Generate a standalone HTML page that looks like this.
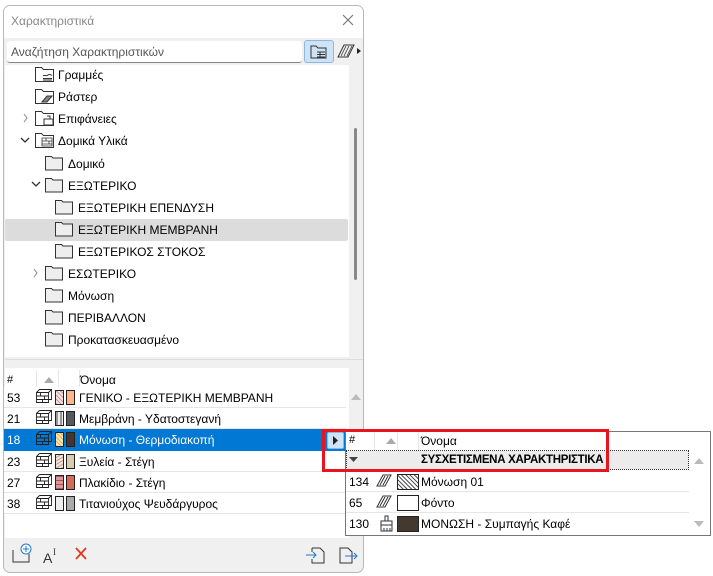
<!DOCTYPE html>
<html><head><meta charset="utf-8"><style>
*{box-sizing:border-box;margin:0;padding:0}
body{width:713px;height:576px;background:#fff;font-family:"Liberation Sans","DejaVu Sans",sans-serif;font-size:12px;color:#000;position:relative;overflow:hidden}
.a{position:absolute}
.panel{left:3px;top:5px;width:361px;height:568px;border:1px solid #b8b8b8;border-radius:7px;background:#f0f0f0;overflow:hidden}
.t{position:absolute;white-space:nowrap}
.row{position:absolute;left:4px;width:342px;height:21px;border-bottom:1px solid #e6e6e6;background:#fff}
.sw{position:absolute;width:9px;height:15px;border:1px solid #222}
</style></head><body>
<div class="a panel">
 <div class="a" style="left:0;top:0;width:361px;height:32px;background:#fff"></div>
 <div class="t" style="left:7px;top:8px;color:#888;font-size:12px">Χαρακτηριστικά</div>
 <svg class="a" style="left:338px;top:8px" width="12" height="12"><path d="M1 1L11 11M11 1L1 11" stroke="#777" stroke-width="1.2"/></svg>
 <div class="a" style="left:3px;top:35px;width:295px;height:22px;background:#fff;border-bottom:1px solid #888;border-radius:3px"></div>
 <div class="t" style="left:7px;top:39px;color:#555;font-size:12px">Αναζήτηση Χαρακτηριστικών</div>
 <div class="a" style="left:300px;top:34px;width:30px;height:23px;background:#cfe3f7;border:1px solid #8fb8e0;border-radius:3px"></div>
 <svg class="a" style="left:305px;top:38px" width="20" height="16"><path d="M2 2h5l2 2h8v10H2z" fill="none" stroke="#333"/><path d="M8 8h8M8 10.5h8M8 13h8M11 8v5" stroke="#333"/></svg>
 <svg class="a" style="left:333px;top:38px" width="26" height="14"><path d="M1 13L7 1h10l-6 12z" fill="none" stroke="#333"/><path d="M4 12l5-10M7 12l5-10M10 12l5-10" stroke="#333" stroke-width=".8"/><path d="M20 4l4 3-4 3z" fill="#222"/></svg>
 <div class="a" style="left:1px;top:59px;width:344px;height:292px;background:#fff"></div>
 <div class="a" style="left:350px;top:122px;width:3px;height:152px;background:#888;border-radius:2px"></div>
 <div class="a" style="left:1px;top:213px;width:343px;height:22px;background:#dcdcdc;border-radius:2px"></div>
 <div class="a" style="left:1px;top:353px;width:359px;height:1px;background:#ddd"></div>
 <div class="a" style="left:1px;top:362px;width:344px;height:170px;background:#fff"></div>
 <div class="t" style="left:3px;top:368px;font-size:11px">#</div>
 <svg class="a" style="left:40px;top:371px" width="10" height="6"><path d="M0 6L5 0L10 6z" fill="#aaa"/></svg>
 <div class="a" style="left:32px;top:364px;width:1px;height:17px;background:#e6e6e6"></div>
 <div class="a" style="left:54px;top:364px;width:1px;height:17px;background:#e6e6e6"></div>
 <div class="a" style="left:75px;top:364px;width:1px;height:17px;background:#e6e6e6"></div>
 <div class="t" style="left:76px;top:367px;font-size:12px">Όνομα</div>
 <svg class="a" style="left:347px;top:388px" width="10" height="6"><path d="M0 6L5 0L10 6z" fill="#bbb"/></svg>
</div>

<svg class="a" style="left:0;top:0" width="360" height="360" fill="none" stroke="#333">
 <g><path d="M35.5 67.5h6l2 2h10v12h-18z"/><path d="M43 76c2-2 3 1 5-1s3 1 4 0M43 78.5h9M43 80h9"/></g>
 <g><path d="M35.5 89.5h6l2 2h10v12h-18z"/><path d="M42 102l5-6h5l-5 6z" fill="#888"/></g>
 <g><path d="M35.5 111.5h6l2 2h10v12h-18z"/><path d="M44 119h9v6h-9zM47 116h3v3" fill="#fff"/></g>
 <g><path d="M35.5 133.5h6l2 2h10v12h-18z"/><path d="M42 138h10v8H42zM42 141h10M42 144h10M46 138v3M49 141v3" stroke-width=".8" fill="#fff"/></g>
 <path d="M24 114l3 4-3 4" stroke="#888"/>
 <path d="M21 138l4 4 4-4" stroke="#333" stroke-width="1.3"/>
 <path d="M32 182l4 4 4-4" stroke="#333" stroke-width="1.3"/>
 <path d="M34 269l3 4-3 4" stroke="#888"/>
</svg>
<svg class="a" style="left:0;top:0" width="360" height="360">
 <g fill="#eee" stroke="#333">
  <path d="M45.5 156.5h6l1.5 1.5h9.5v12h-17z"/>
  <path d="M45.5 178.5h6l1.5 1.5h9.5v12h-17z"/>
  <path d="M55.5 200.5h6l1.5 1.5h9.5v12h-17z"/>
  <path d="M55.5 222.5h6l1.5 1.5h9.5v12h-17z"/>
  <path d="M55.5 244.5h6l1.5 1.5h9.5v12h-17z"/>
  <path d="M45.5 266.5h6l1.5 1.5h9.5v12h-17z"/>
  <path d="M45.5 288.5h6l1.5 1.5h9.5v12h-17z"/>
  <path d="M45.5 310.5h6l1.5 1.5h9.5v12h-17z"/>
  <path d="M45.5 332.5h6l1.5 1.5h9.5v12h-17z"/>
 </g>
</svg>
<div class="t" style="left:58px;top:68px">Γραμμές</div>
<div class="t" style="left:58px;top:90px">Ράστερ</div>
<div class="t" style="left:58px;top:112px">Επιφάνειες</div>
<div class="t" style="left:58px;top:134px">Δομικά Υλικά</div>
<div class="t" style="left:68px;top:157px">Δομικό</div>
<div class="t" style="left:68px;top:179px">ΕΞΩΤΕΡΙΚΟ</div>
<div class="t" style="left:78px;top:201px">ΕΞΩΤΕΡΙΚΗ ΕΠΕΝΔΥΣΗ</div>
<div class="t" style="left:78px;top:223px">ΕΞΩΤΕΡΙΚΗ ΜΕΜΒΡΑΝΗ</div>
<div class="t" style="left:78px;top:245px">ΕΞΩΤΕΡΙΚΟΣ ΣΤΟΚΟΣ</div>
<div class="t" style="left:68px;top:267px">ΕΣΩΤΕΡΙΚΟ</div>
<div class="t" style="left:68px;top:289px">Μόνωση</div>
<div class="t" style="left:68px;top:311px">ΠΕΡΙΒΑΛΛΟΝ</div>
<div class="t" style="left:68px;top:333px">Προκατασκευασμένο</div>

<div class="row" style="top:387px"></div>
<div class="row" style="top:408px"></div>
<div class="row" style="top:429px;background:#0078d4;border:none;height:22px"></div>
<div class="row" style="top:451px"></div>
<div class="row" style="top:472px"></div>
<div class="row" style="top:493px"></div>
<svg class="a" style="left:0;top:0" width="360" height="520">
 <defs><path id="br" fill="none" stroke="#222" stroke-width=".9" d="M36.5 392.5h12v10h-12zM39.5 389.5h12v10h-3M36.5 392.5l3-3M48.5 392.5l3-3M36.5 396h12M36.5 399.5h12M40.5 392.5v3.5M44.5 396v3.5M42.5 399.5v3"/></defs>
 <use href="#br"/><use href="#br" y="21"/><use href="#br" y="42"/><use href="#br" y="64"/><use href="#br" y="85"/><use href="#br" y="106"/>
</svg>
<div class="sw" style="left:55px;top:390px;background:repeating-linear-gradient(45deg,#c99 0 1px,#f4e6e6 1px 3px)"></div>
<div class="sw" style="left:66px;top:390px;background:#fcb68a"></div>
<div class="sw" style="left:55px;top:411px;background:repeating-linear-gradient(90deg,#999 0 2px,#eee 2px 4px)"></div>
<div class="sw" style="left:66px;top:411px;background:#555a60"></div>
<div class="sw" style="left:55px;top:432px;background:repeating-linear-gradient(45deg,#e2b060 0 1px,#fbe8b8 1px 3px)"></div>
<div class="sw" style="left:66px;top:432px;background:#45352f"></div>
<div class="sw" style="left:55px;top:454px;background:repeating-linear-gradient(-30deg,#c9a090 0 1px,#f2e4dc 1px 3px)"></div>
<div class="sw" style="left:66px;top:454px;background:#d8cbb0"></div>
<div class="sw" style="left:55px;top:475px;background:repeating-linear-gradient(0deg,#a55 0 1px,#d99 1px 4px)"></div>
<div class="sw" style="left:66px;top:475px;background:#d86a58"></div>
<div class="sw" style="left:55px;top:496px;background:#eee"></div>
<div class="sw" style="left:66px;top:496px;background:#aaa"></div>
<div class="t" style="left:7px;top:391px">53</div><div class="t" style="left:79px;top:391px">ΓΕΝΙΚΟ - ΕΞΩΤΕΡΙΚΗ ΜΕΜΒΡΑΝΗ</div>
<div class="t" style="left:7px;top:412px">21</div><div class="t" style="left:79px;top:412px">Μεμβράνη - Υδατοστεγανή</div>
<div class="t" style="left:7px;top:433px;color:#fff">18</div><div class="t" style="left:79px;top:433px;color:#fff">Μόνωση - Θερμοδιακοπή</div>
<div class="t" style="left:7px;top:455px">23</div><div class="t" style="left:79px;top:455px">Ξυλεία - Στέγη</div>
<div class="t" style="left:7px;top:476px">27</div><div class="t" style="left:79px;top:476px">Πλακίδιο - Στέγη</div>
<div class="t" style="left:7px;top:497px">38</div><div class="t" style="left:79px;top:497px">Τιτανιούχος Ψευδάργυρος</div>

<svg class="a" style="left:0;top:540px" width="365" height="30">
 <path d="M13 10v12h16V14" fill="none" stroke="#333"/><circle cx="26" cy="9" r="5" fill="#fff" stroke="#1e7ad6"/><path d="M26 6v6M23 9h6" stroke="#1e7ad6"/>
 <text x="43" y="23" font-size="14" font-family="Liberation Sans" fill="#333">A</text><text x="53" y="15" font-size="9" font-family="Liberation Serif" fill="#333">I</text>
 <path d="M76 8l10 11M86 8L76 19" stroke="#e03a1e" stroke-width="1.8"/>
 <path d="M312 8h8l4 4v11h-12v-4M312 12v-4" fill="none" stroke="#333"/><path d="M306 15h10M313 12l3 3-3 3" fill="none" stroke="#1e7ad6"/>
 <path d="M340 8h8l4 4v11h-12z" fill="none" stroke="#333"/><path d="M345 16h12M354 13l3 3-3 3" fill="none" stroke="#1e7ad6"/>
</svg>

<div class="a" style="left:327px;top:432px;width:17px;height:17px;background:#cfe3f7;border:1px solid #8fb8e0;border-radius:2px"></div>
<svg class="a" style="left:333px;top:436px" width="6" height="9"><path d="M0 0l5 4.5L0 9z" fill="#222"/></svg>
<div class="a" style="left:345px;top:431px;width:366px;height:105px;background:#fff;border:1px solid #777"></div>
<div class="a" style="left:346px;top:450px;width:343px;height:1px;border-top:1px dotted #333"></div>
<div class="a" style="left:346px;top:451px;width:343px;height:19px;background:#ececec;border:1px dotted #333;border-top:none"></div>
<div class="t" style="left:349px;top:434px;font-size:11px">#</div>
<svg class="a" style="left:386px;top:438px" width="10" height="6"><path d="M0 6L5 0L10 6z" fill="#aaa"/></svg>
<div class="a" style="left:374px;top:432px;width:1px;height:18px;background:#e6e6e6"></div>
<div class="a" style="left:397px;top:432px;width:1px;height:18px;background:#e6e6e6"></div>
<div class="a" style="left:418px;top:432px;width:1px;height:18px;background:#e6e6e6"></div>
<div class="t" style="left:421px;top:434px">Όνομα</div>
<svg class="a" style="left:349px;top:457px" width="9" height="5"><path d="M0 0h9L4.5 5z" fill="#444"/></svg>
<div class="t" style="left:421px;top:454px;font-weight:bold;font-size:11.5px;letter-spacing:-0.3px">ΣΥΣΧΕΤΙΣΜΕΝΑ ΧΑΡΑΚΤΗΡΙΣΤΙΚΑ</div>
<svg class="a" style="left:694px;top:458px" width="10" height="6"><path d="M0 6L5 0L10 6z" fill="#bbb"/></svg>
<svg class="a" style="left:694px;top:521px" width="10" height="6"><path d="M0 0h10L5 6z" fill="#bbb"/></svg>
<div class="a" style="left:346px;top:491px;width:343px;height:1px;background:#e6e6e6"></div>
<div class="a" style="left:346px;top:512px;width:343px;height:1px;background:#e6e6e6"></div>
<div class="t" style="left:349px;top:475px">134</div>
<div class="t" style="left:349px;top:496px">65</div>
<div class="t" style="left:349px;top:517px">130</div>
<svg class="a" style="left:375px;top:472px" width="25" height="62" fill="none" stroke="#333">
 <path d="M2 14L8 3h8L10 14zM5 13l5-9M8 13l5-9"/>
 <path d="M2 35L8 24h8L10 35zM5 34l5-9M8 34l5-9"/>
 <path d="M10 44h3v5h-3zM6 49h11v4H6zM6 53v6h11v-6M9 56v3M12 56v3M15 56v3"/>
</svg>
<div class="a" style="left:397px;top:474px;width:22px;height:16px;border:1px solid #222;background:repeating-linear-gradient(45deg,#555 0 1px,#fff 1px 3px),#fff"></div>
<div class="a" style="left:397px;top:495px;width:22px;height:16px;border:1px solid #222;background:#fff"></div>
<div class="a" style="left:397px;top:516px;width:22px;height:16px;border:1px solid #222;background:#45382f"></div>
<div class="t" style="left:421px;top:475px">Μόνωση 01</div>
<div class="t" style="left:421px;top:496px">Φόντο</div>
<div class="t" style="left:421px;top:517px">ΜΟΝΩΣΗ - Συμπαγής Καφέ</div>

<div class="a" style="left:322px;top:429px;width:287px;height:43px;border:3px solid #e8141e"></div>
</body></html>
